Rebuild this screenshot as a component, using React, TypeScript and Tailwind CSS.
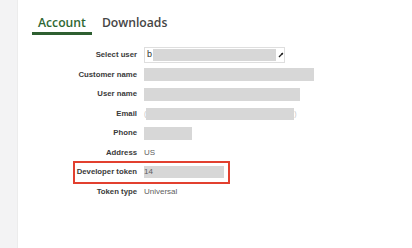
import React from 'react';

const label = "w-[137px] shrink-0 text-right font-bold text-[7.75px] leading-none text-[#3a3a3a]";
const value = "text-[8px] leading-none text-[#606060]";

interface RowProps {
  name: string;
  children?: React.ReactNode;
  tall?: boolean;
}

const Row = ({ name, children, tall }: RowProps) => (
  <div className={`flex items-center gap-[7px] ${tall ? 'h-[21px]' : 'h-[19.5px]'}`}>
    <div className={label}>{name}</div>
    <div className="flex items-center">{children}</div>
  </div>
);

const Bar = ({ w, h = 'h-[13px]' }: { w: string; h?: string }) => (
  <div className={`${w} ${h} bg-[#d7d7d7]`} />
);

export default function App() {
  return (
    <div className="flex w-[412px] h-[248px] bg-white" style={{ fontFamily: '"Liberation Sans", Arial, sans-serif' }}>
      {/* side strip */}
      <div className="w-[18px] h-full bg-[#f3f3f4] border-r border-[#ececec]" />

      <div className="flex-1 flex flex-col">
        {/* Tabs */}
        <div className="flex pt-[14px] pl-[14px] gap-[4px]" style={{ fontFamily: '"Open Sans", sans-serif' }}>
          <div className="px-[6px] pb-[1px] border-b-[3px] border-[#2e5f31] text-[12.2px] leading-[17px] font-semibold text-[#2f6733]">
            Account
          </div>
          <div className="px-[6px] pb-[1px] border-b-[3px] border-transparent text-[12.2px] leading-[17px] font-semibold text-[#454545]">
            Downloads
          </div>
        </div>

        {/* Fields */}
        <div className="flex flex-col mt-[9px] -ml-[18px]">
          <Row name="Select user" tall>
            <div className="flex items-center w-[141px] h-[16px] border border-[#dedede] bg-white pl-[2px]">
              <span className="text-[9px] leading-none text-[#333] w-[6px]">b</span>
              <div className="w-[126px] h-[12px] bg-[#d7d7d7]" />
              <svg width="6" height="6" viewBox="0 0 6 6" className="ml-[2px]">
                <path d="M1 5 L5 1" stroke="#222" strokeWidth="1.3" />
                <path d="M3 1 L5 1 L5 3" fill="#222" />
              </svg>
            </div>
          </Row>
          <Row name="Customer name">
            <Bar w="w-[170px]" />
          </Row>
          <Row name="User name">
            <Bar w="w-[156px]" />
          </Row>
          <Row name="Email">
            <span className="text-[7px] leading-none text-[#c4c4c4]">(</span>
            <Bar w="w-[148px]" h="h-[12px]" />
            <span className="text-[7px] leading-none text-[#c4c4c4]">)</span>
          </Row>
          <Row name="Phone">
            <Bar w="w-[48px]" />
          </Row>
          <Row name="Address">
            <span className={value}>US</span>
          </Row>
          <div className="relative">
            <Row name="Developer token">
              <div className="flex items-center w-[80px] h-[12px] bg-[#d7d7d7]">
                <span className={`${value} text-[#4a4a4a]`}>14</span>
              </div>
            </Row>
            <div className="absolute left-[73px] top-[-2px] w-[157px] h-[23px] border-2 border-[#e2402f] pointer-events-none" />
          </div>
          <Row name="Token type">
            <span className={value}>Universal</span>
          </Row>
        </div>
      </div>
    </div>
  );
}
